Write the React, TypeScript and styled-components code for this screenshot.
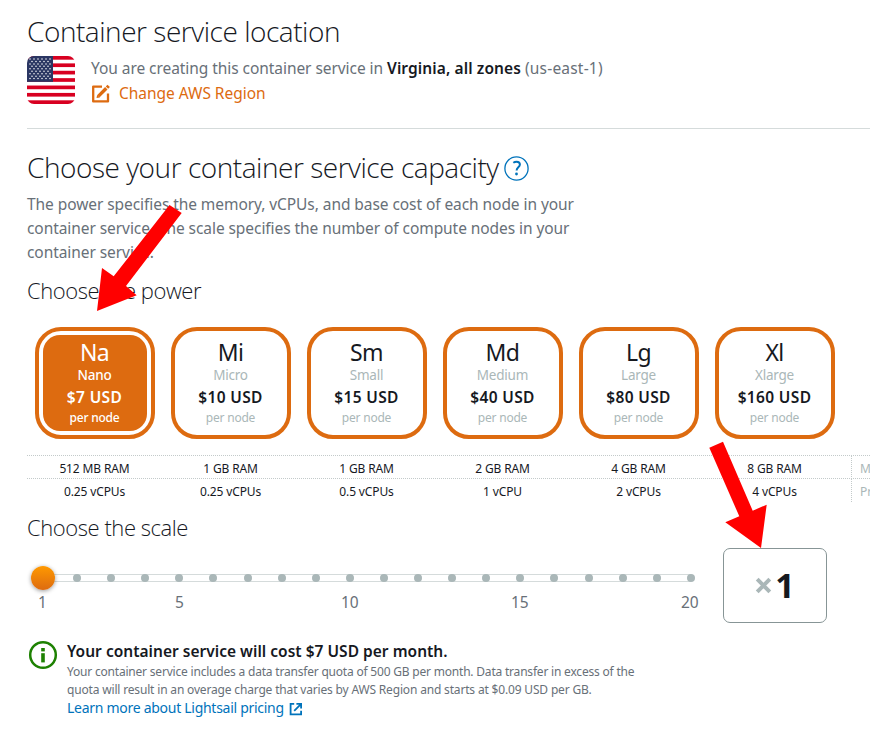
import React from 'react';
import styled, { createGlobalStyle, css } from 'styled-components';

const GlobalStyle = createGlobalStyle`
  * { box-sizing: border-box; }
  html, body { margin: 0; padding: 0; background: #fff; }
  body { overflow: hidden; font-family: "Noto Sans", "Open Sans", sans-serif; color: #16191f; }
`;

const ORANGE = '#dd6b10';
const LINK = '#0073bb';
const MUTED = '#687078';
const DISABLED = '#aab7b8';

const Page = styled.main`
  position: relative;
  width: 870px;
  height: 741px;
  padding: 13px 0 0 27px;
  overflow: hidden;
  white-space: nowrap;
`;

const Heading = styled.h2`
  display: flex;
  align-items: center;
  gap: 5px;
  height: 36px;
  margin: 0;
  font: 300 28px/36px "Open Sans", "Noto Sans", sans-serif;
  letter-spacing: -0.46px;
`;

const SubHeading = styled.h3`
  margin: 11px 0 0;
  font: 300 22px/30px "Open Sans", "Noto Sans", sans-serif;
  letter-spacing: -0.44px;
`;

const Location = styled.div`
  display: flex;
  gap: 16px;
  margin-top: 7px;
`;

const LocationText = styled.div`
  display: flex;
  flex-direction: column;
  gap: 1px;
  font-size: 15.5px;
  line-height: 24px;
  letter-spacing: -0.06px;
  color: ${MUTED};
`;

const RegionName = styled.strong`
  font-weight: 600;
  color: #16191f;
  letter-spacing: 0.1px;
`;

const RegionCode = styled.span`
  letter-spacing: 0.2px;
`;

const RegionLink = styled.a`
  display: flex;
  align-items: center;
  gap: 8px;
  color: ${ORANGE};
  letter-spacing: -0.03px;
`;

const Divider = styled.hr`
  height: 1px;
  margin: 23px 0 20px;
  border: 0;
  background: #d5dbdb;
`;

const Description = styled.p`
  margin: 7px 0 0;
  font-size: 15.5px;
  line-height: 24px;
  letter-spacing: -0.07px;
  color: ${MUTED};
`;

const Plans = styled.div`
  display: flex;
  gap: 16px;
  margin: 22px 0 0 8px;
`;

const PlanCard = styled.button<{ $selected?: boolean }>`
  display: flex;
  flex-direction: column;
  align-items: center;
  width: 120px;
  height: 112px;
  padding: 4px;
  border: 4px solid ${ORANGE};
  border-radius: 26px;
  background: #fff;
  font-family: inherit;
  color: #16191f;
  ${p => p.$selected && css`color: #fff;`}
`;

const PlanFace = styled.span<{ $selected?: boolean }>`
  display: flex;
  flex-direction: column;
  align-items: center;
  width: 104px;
  height: 96px;
  padding: 3px 1px 0 0;
  border-radius: 17px;
  background: ${p => (p.$selected ? ORANGE : 'transparent')};
`;

const PlanCode = styled.span`
  font-size: 23px;
  line-height: 29px;
  letter-spacing: -0.6px;
`;

const PlanNote = styled.span<{ $size: number; $line: number; $selected?: boolean }>`
  font-size: ${p => p.$size}px;
  line-height: ${p => p.$line}px;
  font-weight: ${p => (p.$selected ? 500 : 400)};
  letter-spacing: -0.22px;
  color: ${p => (p.$selected ? '#fff' : DISABLED)};
`;

const PlanPrice = styled.span`
  font-size: 15.5px;
  line-height: 28px;
  font-weight: 600;
  letter-spacing: 0.35px;
`;

const SpecTable = styled.div`
  margin-top: 16px;
`;

const SpecRow = styled.div`
  display: grid;
  grid-template-columns: repeat(6, 136px) 8px 19px;
  height: 23px;
  border-top: 1px dotted #c3caca;
  font-size: 12px;
  line-height: 26px;
  letter-spacing: -0.13px;
  text-align: center;
`;

const Spec = styled.span`
  padding-right: 1px;
`;

const SpecLabel = styled.span`
  grid-column: 8;
  height: 23px;
  padding-left: 8px;
  border-left: 1px dotted #c3caca;
  overflow: hidden;
  text-align: left;
  color: ${DISABLED};
`;

const ScaleRow = styled.div`
  display: flex;
  margin-top: 6px;
`;

const Slider = styled.div`
  width: 668px;
  margin-top: 18px;
`;

const Track = styled.div`
  position: relative;
  display: flex;
  justify-content: space-between;
  align-items: center;
  height: 24px;
  margin-left: 12px;
  width: 656px;
  &::before {
    content: '';
    position: absolute;
    inset: 8px 4px 8px 0;
    border: solid #d5dbdb;
    border-width: 1px 0;
  }
`;

const Stop = styled.span`
  position: relative;
  width: 8px;
  height: 8px;
  border-radius: 50%;
  background: ${DISABLED};
`;

const Knob = styled.span`
  position: absolute;
  left: -8px;
  top: 0;
  width: 24px;
  height: 24px;
  border-radius: 50%;
  background: linear-gradient(#ff9900, #dd6b10);
  box-shadow: 0 1px 4px rgba(0, 0, 0, 0.4);
`;

const Ticks = styled.div`
  display: grid;
  grid-template-columns: 32px 240px 102px 238px 102px;
  font-size: 15.5px;
  line-height: 24px;
  color: ${MUTED};
`;

const Tick = styled.span<{ $pad: number }>`
  padding-left: ${p => p.$pad}px;
`;

const ScaleBox = styled.div`
  display: flex;
  align-items: center;
  justify-content: center;
  gap: 3px;
  width: 104px;
  height: 75px;
  margin-left: 28px;
  padding-bottom: 1px;
  border: 1px solid #879596;
  border-radius: 7px;
  font-size: 34px;
  font-weight: 700;
  line-height: 1;
`;

const Cost = styled.div`
  display: flex;
  gap: 9px;
  margin: 17px 0 0 1px;
`;

const CostText = styled.div`
  margin-top: -1px;
  font-size: 12px;
  line-height: 18px;
  letter-spacing: -0.2px;
  color: ${MUTED};
`;

const CostTitle = styled.div`
  font-size: 15.5px;
  line-height: 24px;
  font-weight: 600;
  letter-spacing: 0.02px;
  color: #16191f;
`;

const CostLine = styled.div<{ $spacing: number }>`
  letter-spacing: ${p => p.$spacing}px;
`;

const PricingLink = styled.a`
  display: flex;
  align-items: center;
  gap: 5px;
  font-size: 14px;
  line-height: 18px;
  letter-spacing: -0.28px;
  color: ${LINK};
`;

const Icon = styled.svg<{ $drop?: number }>`
  display: block;
  flex: none;
  margin-top: ${p => p.$drop ?? 0}px;
`;

const Annotations = styled.svg`
  position: absolute;
  inset: 0;
  pointer-events: none;
`;

const Flag = () => (
  <Icon width="48" height="48" viewBox="0 0 48 48">
    <defs>
      <clipPath id="flag"><rect width="48" height="48" rx="7" /></clipPath>
    </defs>
    <g clipPath="url(#flag)">
      <rect width="48" height="48" fill="#fff" />
      {Array.from({ length: 7 }, (_, i) => (
        <rect key={i} y={(i * 96) / 13} width="48" height={48 / 13} fill="#d80021" />
      ))}
      <rect width="26" height="25.85" fill="#2b3663" />
      {Array.from({ length: 9 }, (_, r) =>
        Array.from({ length: r % 2 ? 5 : 6 }, (_, c) => (
          <circle key={`${r}-${c}`} cx={3 + c * 4 + (r % 2 ? 2 : 0)} cy={3 + r * 2.45} r="0.75" fill="#fff" />
        ))
      )}
    </g>
  </Icon>
);

const EditIcon = () => (
  <Icon width="20" height="20" viewBox="0 0 20 20" fill="none" stroke={ORANGE} $drop={1}>
    <path d="M11 2.6H2.2V17.4H17V9.6" strokeWidth="2.3" strokeLinejoin="round" />
    <path d="M7.5 12.1 15.3 4.3" strokeWidth="3.4" />
    <path d="M5.5 14.1 6.2 10.7 9 13.4Z" fill={ORANGE} stroke="none" />
    <path d="M16 3.6 17.7 1.9" strokeWidth="3.4" />
  </Icon>
);

const HelpIcon = () => (
  <Icon width="25" height="25" viewBox="0 0 25 25" fill="none" stroke={LINK} $drop={2}>
    <circle cx="12.5" cy="12.5" r="11.6" strokeWidth="1.3" />
    <path d="M9.3 6.7C10.3 6 11.4 5.7 12.6 5.7C14.7 5.7 15.9 6.9 15.9 8.6C15.9 11.2 12.6 11.5 12.6 14.4" strokeWidth="2" />
    <circle cx="12.5" cy="18" r="1.4" fill={LINK} stroke="none" />
  </Icon>
);

const InfoIcon = () => (
  <Icon width="30" height="30" viewBox="0 0 30 30">
    <circle cx="15" cy="15" r="12.8" fill="none" stroke="#1d8102" strokeWidth="2.5" />
    <rect x="13.2" y="8" width="3.6" height="3.4" fill="#1d8102" />
    <rect x="13.2" y="13.2" width="3.6" height="9.2" fill="#1d8102" />
  </Icon>
);

const ExternalIcon = () => (
  <Icon width="14" height="14" viewBox="0 0 14 14" fill="none" stroke={LINK} strokeWidth="1.8" $drop={1}>
    <path d="M5.2 1.9H1.6V12.4H12.1V8.8" />
    <path d="M7.4 1.9H12.1V6.6M11.9 2.1 5.2 8.8" />
  </Icon>
);

const CrossIcon = () => (
  <Icon width="17" height="17" viewBox="0 0 17 17" stroke={DISABLED} strokeWidth="4">
    <path d="M2.2 2.2 14.8 14.8M14.8 2.2 2.2 14.8" />
  </Icon>
);

const plans = [
  { code: 'Na', name: 'Nano', price: '$7 USD', ram: '512 MB RAM', cpu: '0.25 vCPUs' },
  { code: 'Mi', name: 'Micro', price: '$10 USD', ram: '1 GB RAM', cpu: '0.25 vCPUs' },
  { code: 'Sm', name: 'Small', price: '$15 USD', ram: '1 GB RAM', cpu: '0.5 vCPUs' },
  { code: 'Md', name: 'Medium', price: '$40 USD', ram: '2 GB RAM', cpu: '1 vCPU' },
  { code: 'Lg', name: 'Large', price: '$80 USD', ram: '4 GB RAM', cpu: '2 vCPUs' },
  { code: 'Xl', name: 'Xlarge', price: '$160 USD', ram: '8 GB RAM', cpu: '4 vCPUs' },
];

export default function App() {
  return (
    <Page>
      <GlobalStyle />
      <Heading>Container service location</Heading>
      <Location>
        <Flag />
        <LocationText>
          <div>
            You are creating this container service in <RegionName>Virginia, all zones</RegionName>{' '}
            <RegionCode>(us-east-1)</RegionCode>
          </div>
          <RegionLink><EditIcon />Change AWS Region</RegionLink>
        </LocationText>
      </Location>
      <Divider />
      <Heading>Choose your container service capacity<HelpIcon /></Heading>
      <Description>
        The power specifies the memory, vCPUs, and base cost of each node in your<br />
        container service. The scale specifies the number of compute nodes in your<br />
        container service.
      </Description>
      <SubHeading>Choose the power</SubHeading>
      <Plans>
        {plans.map((p, i) => {
          const selected = i === 0;
          return (
            <PlanCard key={p.code} $selected={selected}>
              <PlanFace $selected={selected}>
                <PlanCode>{p.code}</PlanCode>
                <PlanNote $size={13.5} $line={16} $selected={selected}>{p.name}</PlanNote>
                <PlanPrice>{p.price}</PlanPrice>
                <PlanNote $size={12} $line={14} $selected={selected}>per node</PlanNote>
              </PlanFace>
            </PlanCard>
          );
        })}
      </Plans>
      <SpecTable>
        <SpecRow>
          {plans.map(p => <Spec key={p.code}>{p.ram}</Spec>)}
          <SpecLabel>Memory</SpecLabel>
        </SpecRow>
        <SpecRow>
          {plans.map(p => <Spec key={p.code}>{p.cpu}</Spec>)}
          <SpecLabel>Processing</SpecLabel>
        </SpecRow>
      </SpecTable>
      <SubHeading>Choose the scale</SubHeading>
      <ScaleRow>
        <Slider>
          <Track>
            {Array.from({ length: 20 }, (_, i) => <Stop key={i} />)}
            <Knob />
          </Track>
          <Ticks>
            <Tick $pad={11}>1</Tick>
            <Tick $pad={116}>5</Tick>
            <Tick $pad={42}>10</Tick>
            <Tick $pad={110}>15</Tick>
            <Tick $pad={42}>20</Tick>
          </Ticks>
        </Slider>
        <ScaleBox><CrossIcon />1</ScaleBox>
      </ScaleRow>
      <Cost>
        <InfoIcon />
        <CostText>
          <CostTitle>Your container service will cost $7 USD per month.</CostTitle>
          <CostLine $spacing={-0.2}>
            Your container service includes a data transfer quota of 500 GB per month. Data transfer in excess of the
          </CostLine>
          <CostLine $spacing={-0.17}>
            quota will result in an overage charge that varies by AWS Region and starts at $0.09 USD per GB.
          </CostLine>
          <PricingLink>Learn more about Lightsail pricing<ExternalIcon /></PricingLink>
        </CostText>
      </Cost>
      <Annotations width="870" height="741" fill="#ff0000">
        <polygon points="169.5,205 181.7,213 126,286 136.7,295.3 97,311 102,268 113.7,276.3" />
        <polygon points="709.3,447.7 723,441.7 752.7,510.7 766.7,504.7 761,548 725.3,522.3 739.3,516.3" />
      </Annotations>
    </Page>
  );
}
